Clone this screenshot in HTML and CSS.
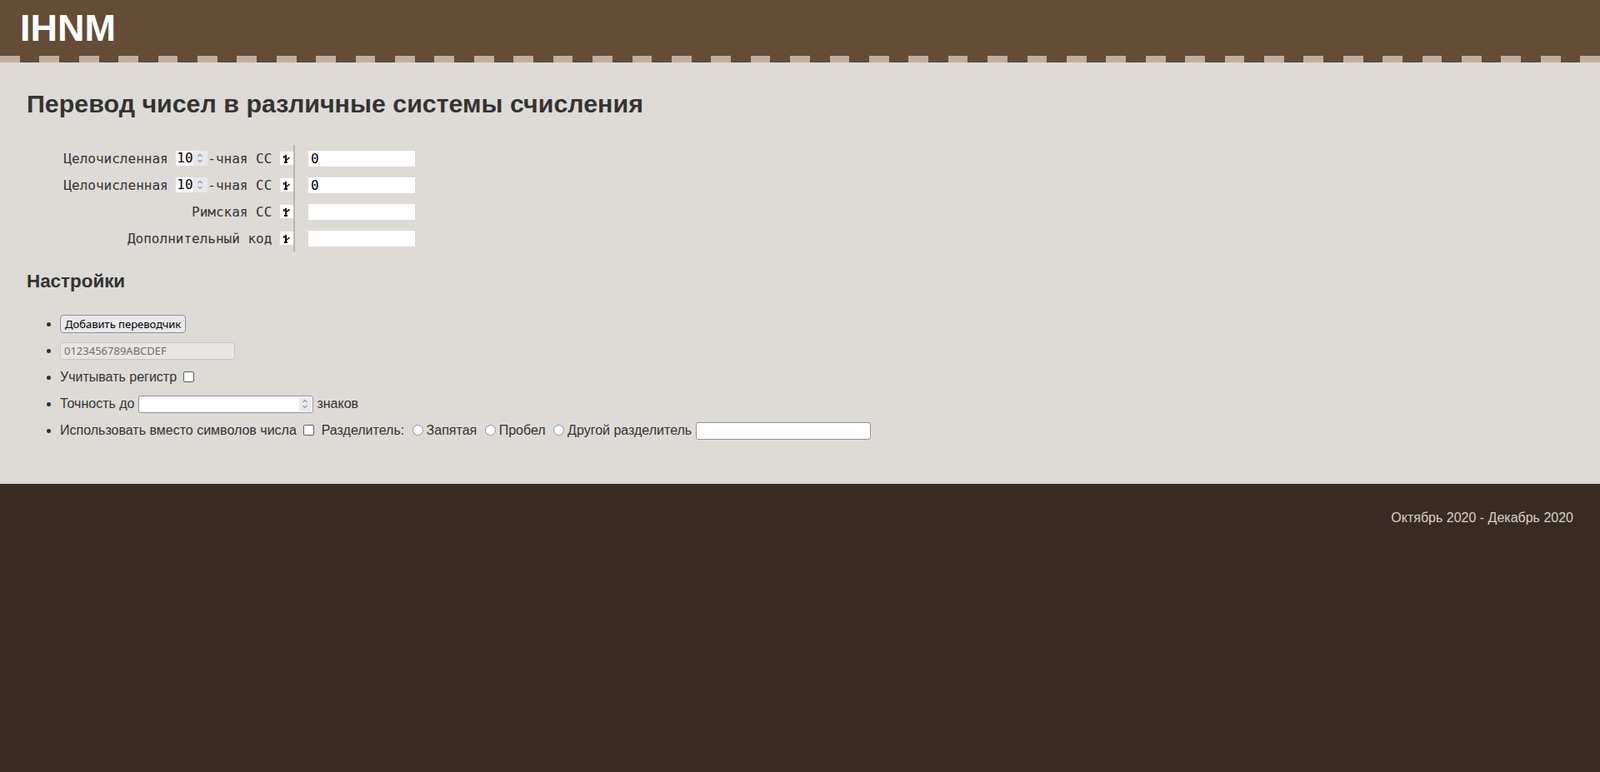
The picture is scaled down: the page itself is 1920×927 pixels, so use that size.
FILE: index.html
```html
<!DOCTYPE html>
<html lang="ru">
<head>
<meta charset="utf-8">
<title>IHNM</title>
<link rel="stylesheet" href="styles.css">
</head>
<body>
<header class="site-header">
  <div class="logo">IHNM</div>
</header>
<main class="content">
  <h1 class="page-title">Перевод чисел в различные системы счисления</h1>
  <div class="converter">
    <div class="cell-label">
      <span class="txt">Целочисленная </span><span class="num-wrap"><input class="base" type="number" value="10"><span class="spin"><svg viewBox="0 0 8 14" width="8" height="14"><path d="M1.5 5 L4 2.5 L6.5 5 M1.5 9 L4 11.5 L6.5 9" stroke="#8f8f9d" stroke-width="1.1" fill="none"/></svg></span></span><span class="txt">-чная СС </span><span class="swap"><svg viewBox="0 0 16 16" width="16" height="16"><rect x="6" y="4" width="2" height="10" fill="#111"/><rect x="4" y="5" width="1.6" height="3" fill="#111"/><path d="M7.5 10.5 L11.5 7" stroke="#111" stroke-width="1.6" fill="none"/><rect x="5" y="12" width="4" height="2" fill="#111"/></svg></span>
    </div>
    <div class="cell-input"><input class="value" type="text" value="0"></div>

    <div class="cell-label">
      <span class="txt">Целочисленная </span><span class="num-wrap"><input class="base" type="number" value="10"><span class="spin"><svg viewBox="0 0 8 14" width="8" height="14"><path d="M1.5 5 L4 2.5 L6.5 5 M1.5 9 L4 11.5 L6.5 9" stroke="#8f8f9d" stroke-width="1.1" fill="none"/></svg></span></span><span class="txt">-чная СС </span><span class="swap"><svg viewBox="0 0 16 16" width="16" height="16"><rect x="6" y="4" width="2" height="10" fill="#111"/><rect x="4" y="5" width="1.6" height="3" fill="#111"/><path d="M7.5 10.5 L11.5 7" stroke="#111" stroke-width="1.6" fill="none"/><rect x="5" y="12" width="4" height="2" fill="#111"/></svg></span>
    </div>
    <div class="cell-input"><input class="value" type="text" value="0"></div>

    <div class="cell-label">
      <span class="txt">Римская СС </span><span class="swap"><svg viewBox="0 0 16 16" width="16" height="16"><rect x="6" y="4" width="2" height="10" fill="#111"/><rect x="4" y="5" width="1.6" height="3" fill="#111"/><path d="M7.5 8.5 L11.5 5.5" stroke="#111" stroke-width="1.6" fill="none"/><rect x="5" y="12" width="4" height="2" fill="#111"/></svg></span>
    </div>
    <div class="cell-input"><input class="value" type="text" value=""></div>

    <div class="cell-label">
      <span class="txt">Дополнительный код </span><span class="swap"><svg viewBox="0 0 16 16" width="16" height="16"><rect x="6" y="4" width="2" height="10" fill="#111"/><rect x="4" y="5" width="1.6" height="3" fill="#111"/><path d="M7.5 10.5 L11.5 7" stroke="#111" stroke-width="1.6" fill="none"/><rect x="5" y="12" width="4" height="2" fill="#111"/></svg></span>
    </div>
    <div class="cell-input"><input class="value" type="text" value=""></div>
  </div>

  <h2 class="section-title">Настройки</h2>
  <ul class="settings">
    <li><button type="button" class="btn">Добавить переводчик</button></li>
    <li><input class="field field-disabled" type="text" value="0123456789ABCDEF" disabled></li>
    <li>Учитывать регистр <input class="check" type="checkbox"></li>
    <li>Точность до <span class="field num-field"><input class="num-inner" type="number"><span class="spin spin-small"><svg viewBox="0 0 8 14" width="8" height="14"><path d="M1.5 5 L4 2.5 L6.5 5 M1.5 9 L4 11.5 L6.5 9" stroke="#8f8f9d" stroke-width="1.1" fill="none"/></svg></span></span> знаков</li>
    <li>Использовать вместо символов числа <input class="check" type="checkbox"> <span class="sep-label">Разделитель:</span> <input class="radio" type="radio" name="sep"><label>Запятая</label> <input class="radio" type="radio" name="sep"><label>Пробел</label> <input class="radio" type="radio" name="sep"><label>Другой разделитель</label> <input class="field" type="text"></li>
  </ul>
</main>
<footer class="site-footer">Октябрь 2020 - Декабрь 2020</footer>
</body>
</html>
```

FILE: styles.css
```css
html, body {
  margin: 0;
  padding: 0;
}

body {
  font-family: "Liberation Sans", Arial, sans-serif;
  font-size: 16px;
  color: #333333;
  background: #dedbd6;
  min-height: 100vh;
  display: flex;
  flex-direction: column;
}

.site-header {
  padding: 8px 24px 16px 24px;
  height: 51px;
  background:
    repeating-linear-gradient(90deg, #c0ae9f 0, #c0ae9f 23.704px, transparent 23.704px, transparent 47.407px) left bottom / 100% 8px no-repeat,
    #644c36;
}

.logo {
  color: #ffffff;
  font-weight: bold;
  font-size: 45px;
  line-height: 51px;
}

.content {
  padding: 32px;
}

.page-title {
  font-size: 30.4px;
  font-weight: bold;
  margin: 0 0 32px 0;
  color: #333333;
}

/* converter */
.converter {
  display: grid;
  grid-template-columns: 320px auto;
  grid-auto-rows: 32px;
  justify-content: start;
  font-family: "DejaVu Sans Mono", monospace;
  font-size: 16px;
  color: #333333;
}

.cell-label {
  display: flex;
  justify-content: flex-end;
  align-items: center;
}

.txt {
  white-space: pre;
}

.num-wrap {
  display: flex;
  width: 38px;
  height: 18px;
  background: #ffffff;
}

.base {
  width: 20px;
  height: 18px;
  box-sizing: border-box;
  border: 0;
  padding: 0 0 0 1px;
  margin: 0;
  font-family: "DejaVu Sans Mono", monospace;
  font-size: 16px;
  line-height: 18px;
  color: #000;
  background: transparent;
  -moz-appearance: textfield;
  appearance: textfield;
  outline: none;
}

input[type="number"]::-webkit-inner-spin-button,
input[type="number"]::-webkit-outer-spin-button {
  -webkit-appearance: none;
  display: none;
  margin: 0;
}

.spin {
  display: flex;
  align-items: center;
  justify-content: center;
  width: 18px;
  background: #e9e9ed;
}

.spin svg {
  display: block;
}

.swap {
  display: block;
  width: 16px;
  height: 16px;
  background: #ffffff;
}

.swap svg {
  display: block;
}

.cell-input {
  display: flex;
  align-items: center;
  border-left: 2px solid #c0b3a6;
  padding-left: 16px;
}

.value {
  width: 128px;
  height: 19px;
  box-sizing: border-box;
  border: 0;
  padding: 0 3px;
  margin: 0;
  font-family: "DejaVu Sans Mono", monospace;
  font-size: 16px;
  color: #000;
  background: #ffffff;
}

/* settings */
.section-title {
  font-size: 22.4px;
  font-weight: bold;
  margin: 23px 0 21.5px 0;
  color: #333333;
}

.settings {
  margin: 21.5px 0 16px 0;
  padding-left: 40px;
}

.settings li {
  line-height: 32px;
  height: 32px;
}

.btn {
  font-family: "Noto Sans", "Open Sans", sans-serif;
  font-size: 13px;
  font-weight: normal;
  color: #000;
  background: #e9e9ed;
  border: 1px solid #8f8f9d;
  border-radius: 4px;
  padding: 0 5px;
  height: 22px;
  line-height: 18px;
  margin: 0;
  vertical-align: middle;
}

.field {
  display: inline-block;
  box-sizing: border-box;
  width: 210px;
  height: 21px;
  border: 1px solid #8f8f9d;
  border-radius: 3px;
  background: #ffffff;
  padding: 0 4px;
  margin: 0;
  font-family: "Noto Sans", "Open Sans", sans-serif;
  font-size: 13px;
  vertical-align: middle;
}

.field-disabled {
  background: #e8e6e2;
  border-color: #c8c5c1;
  color: #6d6d6d;
}

.num-field {
  display: inline-flex;
  align-items: stretch;
  padding: 1px 1px 1px 4px;
}

.num-inner {
  flex: 1;
  min-width: 0;
  border: 0;
  padding: 0;
  margin: 0;
  background: transparent;
  -moz-appearance: textfield;
  appearance: textfield;
  font-family: "Noto Sans", "Open Sans", sans-serif;
  font-size: 13px;
  outline: none;
}

.spin-small {
  width: 15px;
  border-radius: 2px;
}

.check {
  -webkit-appearance: none;
  appearance: none;
  box-sizing: border-box;
  width: 13px;
  height: 13px;
  margin: 3px 3px 3px 4px;
  border: 1.5px solid #5b5b66;
  border-radius: 2px;
  background: #ffffff;
  vertical-align: middle;
  position: relative;
  top: -1px;
}

.radio {
  -webkit-appearance: none;
  appearance: none;
  box-sizing: border-box;
  width: 13px;
  height: 13px;
  margin: 3px 4px 0 5px;
  border: 1.5px solid #8f8f9d;
  border-radius: 50%;
  background: #ffffff;
  vertical-align: middle;
  position: relative;
  top: -2px;
}

.sep-label {
  margin-left: 1px;
}

.site-footer {
  flex: 1;
  background: #382c22;
  color: #d8d0c8;
  text-align: right;
  padding: 32px;
  font-size: 16px;
}
```
